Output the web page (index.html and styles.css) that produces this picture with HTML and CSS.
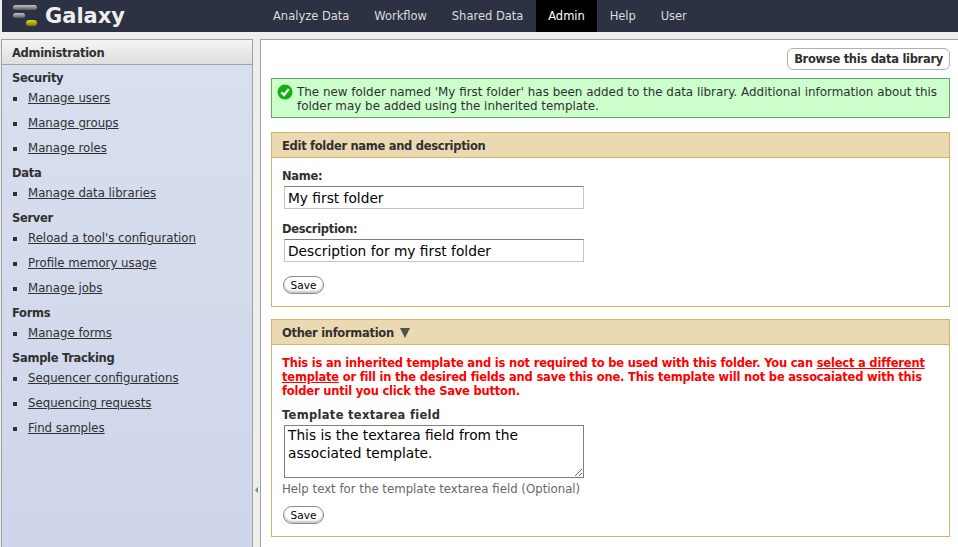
FILE: index.html
```html
<!DOCTYPE html>
<html lang="en">
<head>
    <meta charset="UTF-8">
    <title>Galaxy</title>
    <link rel="stylesheet" href="styles.css">
</head>
<body>
    <div class="masthead">
        <div class="brand">
            <svg class="logo" width="25" height="24" viewBox="0 0 25 24">
                <defs>
                    <linearGradient id="barGray" x1="0" y1="0" x2="0" y2="1">
                        <stop offset="0" stop-color="#c4c6c8"/>
                        <stop offset="1" stop-color="#55585e"/>
                    </linearGradient>
                    <linearGradient id="barYellow" x1="0" y1="0" x2="0" y2="1">
                        <stop offset="0" stop-color="#dcd617"/>
                        <stop offset="1" stop-color="#7d7a10"/>
                    </linearGradient>
                </defs>
                <rect x="0" y="1" width="24" height="5" rx="2.5" fill="url(#barGray)"/>
                <rect x="0" y="9" width="12" height="5" rx="2.5" fill="url(#barGray)"/>
                <rect x="13" y="16" width="11" height="6" rx="3" fill="url(#barYellow)"/>
            </svg>
            <span class="brand-name">Galaxy</span>
        </div>
        <ul class="nav">
            <li>Analyze Data</li>
            <li>Workflow</li>
            <li>Shared Data</li>
            <li class="active">Admin</li>
            <li>Help</li>
            <li>User</li>
        </ul>
    </div>

    <div class="columns">
        <div class="sidebar">
            <div class="sidebar-title">Administration</div>
            <div class="sidebar-body">
                <div class="section-title">Security</div>
                <ul class="links">
                    <li><a href="#">Manage users</a></li>
                    <li><a href="#">Manage groups</a></li>
                    <li><a href="#">Manage roles</a></li>
                </ul>
                <div class="section-title">Data</div>
                <ul class="links">
                    <li><a href="#">Manage data libraries</a></li>
                </ul>
                <div class="section-title">Server</div>
                <ul class="links">
                    <li><a href="#">Reload a tool's configuration</a></li>
                    <li><a href="#">Profile memory usage</a></li>
                    <li><a href="#">Manage jobs</a></li>
                </ul>
                <div class="section-title">Forms</div>
                <ul class="links">
                    <li><a href="#">Manage forms</a></li>
                </ul>
                <div class="section-title">Sample Tracking</div>
                <ul class="links">
                    <li><a href="#">Sequencer configurations</a></li>
                    <li><a href="#">Sequencing requests</a></li>
                    <li><a href="#">Find samples</a></li>
                </ul>
            </div>
        </div>

        <div class="splitter"><span class="arrow"></span></div>

        <div class="content">
            <div class="actions">
                <a href="#" class="action-btn">Browse this data library</a>
            </div>

            <div class="done-message">
                <svg class="done-icon" width="16" height="16" viewBox="0 0 16 16">
                    <circle cx="8" cy="8" r="7.5" fill="#10b010"/>
                    <path d="M4.2 8.2 L7 11 L11.8 5" fill="none" stroke="#fff" stroke-width="2.2"/>
                </svg>
                <span>The new folder named 'My first folder' has been added to the data library. Additional information about this folder may be added using the inherited template.</span>
            </div>

            <div class="form-box">
                <div class="form-title">Edit folder name and description</div>
                <div class="form-body">
                    <div class="form-row">
                        <label>Name:</label>
                        <input type="text" class="field" value="My first folder">
                    </div>
                    <div class="form-row">
                        <label>Description:</label>
                        <input type="text" class="field" value="Description for my first folder">
                    </div>
                    <button class="save-btn first-save">Save</button>
                </div>
            </div>

            <div class="form-box">
                <div class="form-title">Other information <span class="caret"></span></div>
                <div class="form-body">
                    <div class="warning">This is an inherited template and is not required to be used with this folder. You can <a href="#">select a different template</a> or fill in the desired fields and save this one. This template will not be assocaiated with this folder until you click the Save button.</div>
                    <div class="form-row">
                        <label class="wide-label">Template textarea field</label>
                        <textarea class="field area">This is the textarea field from the associated template.</textarea>
                        <div class="help-text">Help text for the template textarea field (Optional)</div>
                    </div>
                    <button class="save-btn">Save</button>
                </div>
            </div>
        </div>
    </div>
</body>
</html>
```

FILE: styles.css
```css
* {
    box-sizing: border-box;
    margin: 0;
    padding: 0;
}

html, body {
    height: 547px;
    overflow: hidden;
}

body {
    background: #eeeeee;
    font-family: "DejaVu Sans", Verdana, sans-serif;
    font-size: 11.92px;
    color: #303030;
    line-height: 14px;
}

a {
    color: #303030;
}

.masthead {
    display: flex;
    height: 32px;
    background: #2c3143;
    margin-left: 2px;
}

.brand {
    display: flex;
    align-items: center;
    width: 258.6px;
    padding-left: 11px;
    gap: 7px;
}

.logo {
    align-self: flex-start;
    margin-top: 4px;
}

.brand-name {
    color: #eeeeee;
    font-size: 21px;
    font-weight: bold;
}

.nav {
    display: flex;
    list-style: none;
    font-size: 11.5px;
}

.nav li {
    padding: 0 12.4px;
    line-height: 32px;
    color: #dddddd;
}

.nav li.active {
    background: #000000;
    color: #ffffff;
}

.columns {
    display: flex;
    height: 515px;
    padding-top: 7px;
}

.sidebar {
    width: 252px;
    margin-left: 1px;
    border: 1px solid #a0a0a0;
    border-bottom: none;
    background: linear-gradient(#d8dfee, #cfd6eb);
}

.sidebar-title {
    height: 25px;
    padding: 6px 10px;
    font-size: 11.5px;
    font-weight: bold;
    letter-spacing: -0.3px;
    background: linear-gradient(#f4f4f4, #dedede);
    border-bottom: 1px solid #a0a0a0;
}

.sidebar-body {
    padding: 6px 10px;
}

.section-title {
    font-size: 11.5px;
    font-weight: bold;
    letter-spacing: -0.3px;
    margin-bottom: 3px;
}

.links {
    list-style: none;
    margin-bottom: 3px;
    font-size: 11.75px;
}

.links li {
    position: relative;
    height: 25px;
    padding: 3px 0 0 16px;
}

.links li::before {
    content: "";
    position: absolute;
    left: 1px;
    top: 9px;
    width: 4px;
    height: 4px;
    background: #303030;
}

.splitter {
    display: flex;
    align-items: center;
    justify-content: center;
    width: 7px;
    padding-top: 394px;
}

.arrow {
    border-right: 3px solid #808080;
    border-top: 3px solid transparent;
    border-bottom: 3px solid transparent;
}

.content {
    flex: 1;
    background: #ffffff;
    border: 1px solid #a0a0a0;
    border-right: none;
    border-bottom: none;
    padding: 8px 8px 0 10px;
}

.actions {
    display: flex;
    justify-content: flex-end;
    margin-bottom: 8px;
}

.action-btn {
    display: block;
    height: 22px;
    padding: 3px 6px;
    font-size: 11.5px;
    font-weight: bold;
    letter-spacing: -0.3px;
    text-decoration: none;
    border: 1px solid #b0b0b0;
    border-radius: 6px;
}

.done-message {
    display: flex;
    gap: 4px;
    height: 40px;
    padding: 5px 8px 5px 5px;
    background: #ccffcc;
    border: 1px solid #66aa66;
    margin-bottom: 14px;
}

.done-icon {
    flex: none;
}

.done-message span {
    margin-top: 1px;
}

.form-box {
    border: 1px solid #d8b365;
    margin-bottom: 12px;
}

.form-title {
    height: 25px;
    padding: 6px 10px;
    font-size: 11.5px;
    font-weight: bold;
    letter-spacing: -0.3px;
    background: #ebd9b2;
    border-bottom: 1px solid #d8b365;
}

.form-body {
    padding: 11px 10px 12px;
}

.form-row {
    margin-bottom: 13px;
}

.form-row label {
    display: block;
    font-size: 11.5px;
    font-weight: bold;
    letter-spacing: -0.3px;
    margin-bottom: 3px;
}

.form-row .wide-label {
    letter-spacing: 0.3px;
}

.field {
    display: block;
    width: 300px;
    height: 23px;
    margin-left: 2px;
    padding: 1px 3px;
    font-family: "DejaVu Sans", Verdana, sans-serif;
    font-size: 13.75px;
    color: #000000;
    border: 1px solid #c4c4c4;
    border-top-color: #808080;
    background: #ffffff;
}

.area {
    height: 53px;
    padding-top: 0;
    line-height: 18px;
    border-color: #808080;
}

.help-text {
    font-size: 11.75px;
    color: #686868;
    margin-top: 4px;
    margin-bottom: -3px;
}

.save-btn {
    display: block;
    width: 41px;
    height: 18px;
    margin-left: 1px;
    font-family: "DejaVu Sans", Verdana, sans-serif;
    font-size: 10.5px;
    color: #000000;
    background: #ffffff;
    border: 1px solid #8c8c8c;
    border-radius: 9px;
    box-shadow: inset 0 -2px 2px #c8c8c8;
}

.first-save {
    margin-top: 14px;
}

.caret {
    display: inline-block;
    margin-left: 2px;
    margin-bottom: -1px;
    border-top: 10px solid #505050;
    border-left: 5.5px solid transparent;
    border-right: 5.5px solid transparent;
}

.warning {
    color: #ff0000;
    font-size: 11.5px;
    font-weight: bold;
    letter-spacing: -0.2px;
    margin-bottom: 10px;
}

.warning a {
    color: #ff0000;
}
```
